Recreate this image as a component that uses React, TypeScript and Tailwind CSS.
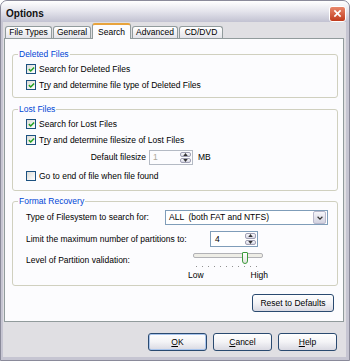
import React from "react"

// XP style "Options" dialog, Search tab

function Check({ checked }: { checked?: boolean }) {
  return (
    <span className="flex h-[10px] w-[10px] shrink-0 items-center justify-center border border-[#1c5180] bg-linear-to-br from-[#dcdcd7] to-white">
      {checked && (
        <svg viewBox="0 0 8 8" className="h-[7px] w-[7px]">
          <path d="M1 3.6 L3.1 5.7 L7 1.6" fill="none" stroke="#21a121" strokeWidth="1.7" />
        </svg>
      )}
    </span>
  )
}

function CheckRow({ checked, children }: { checked?: boolean; children: React.ReactNode }) {
  return (
    <div className="flex h-[12px] items-center pl-[13px]">
      <Check checked={checked} />
      <span className="ml-[3px] whitespace-nowrap">{children}</span>
    </div>
  )
}

function Spin() {
  return (
    <div className="flex h-full w-[12px] shrink-0 flex-col gap-px py-px pr-px">
      {[0, 1].map((i) => (
        <div
          key={i}
          className="flex flex-1 items-center justify-center rounded-[2px] border border-[#a0a0b4] bg-linear-to-b from-[#f8f8fc] to-[#d8d8e4]"
        >
          <svg viewBox="0 0 6 4" className="h-[3px] w-[5px]">
            <path d={i === 0 ? "M0 4 L3 0 L6 4 Z" : "M0 0 L3 4 L6 0 Z"} fill="#333" />
          </svg>
        </div>
      ))}
    </div>
  )
}

function Group({ label, className, children }: { label: string; className?: string; children: React.ReactNode }) {
  return (
    <fieldset className={`ml-[7px] mr-[5px] rounded-[3px] border border-[#d0d0bf] ${className ?? ""}`}>
      <legend className="ml-[5px] px-px leading-[10px] text-[#0046d5]">{label}</legend>
      {children}
    </fieldset>
  )
}

function Tab({ label, active, w }: { label: string; active?: boolean; w: string }) {
  if (active) {
    return (
      <div
        className={`relative z-10 -mb-px flex h-[16px] shrink-0 items-start justify-center rounded-t-[3px] border-x border-t-2 border-x-[#919b9c] border-t-[#e8a33c] bg-[#fcfcfe] pt-[2px] ${w}`}
      >
        {label}
      </div>
    )
  }
  return (
    <div
      className={`flex h-[12px] shrink-0 items-center justify-center rounded-t-[3px] border border-b-0 border-[#919b9c] bg-linear-to-b from-white to-[#e4e4ea] ${w}`}
    >
      {label}
    </div>
  )
}

function XpButton({ children, className, primary }: { children: React.ReactNode; className?: string; primary?: boolean }) {
  return (
    <div
      className={`flex h-[18px] items-center justify-center rounded-[3px] border border-[#2a4a70] bg-linear-to-b from-white via-[#f3f3f6] to-[#d9d9e2] ${
        primary ? "shadow-[inset_0_0_0_1px_#a8c4ec]" : ""
      } ${className ?? ""}`}
    >
      {children}
    </div>
  )
}

export default function App() {
  return (
    <div className="h-[361px] w-[350px] bg-white font-['Liberation_Sans',Arial,sans-serif] text-[8.5px] leading-[11px] text-black">
      <div className="flex h-full flex-col rounded-t-[7px] border border-[#8a8a9a] bg-[#c6c5d2]">
        {/* title bar */}
        <div className="flex h-[21px] shrink-0 items-center justify-between rounded-t-[6px] bg-linear-to-b from-white via-[#e4e4ec] to-[#c2c2d2] pl-[5px] pr-[3px] pt-[4px]">
          <span className="text-[10px] font-bold leading-[12px] text-[#111]">Options</span>
          <div className="flex h-[16px] w-[17px] items-center justify-center rounded-[3px] border border-white bg-linear-to-b from-[#e8866a] to-[#c0391a]">
            <svg viewBox="0 0 10 10" className="h-[9px] w-[9px]">
              <path d="M1.5 1.5 L8.5 8.5 M8.5 1.5 L1.5 8.5" stroke="white" strokeWidth="1.8" />
            </svg>
          </div>
        </div>

        {/* body */}
        <div className="mb-[3px] ml-[2px] mr-[3px] flex flex-1 flex-col bg-[#e0dfe3] pl-px">
          {/* tabs */}
          <div className="ml-px flex h-[16px] items-end gap-px">
            <Tab label="File Types" w="w-[47px]" />
            <Tab label="General" w="w-[38px]" />
            <Tab label="Search" w="w-[39px]" active />
            <Tab label="Advanced" w="w-[46px]" />
            <Tab label="CD/DVD" w="w-[44px]" />
          </div>

          {/* tab panel */}
          <div className="flex h-[284px] w-[340px] flex-col border border-[#919b9c] bg-[#fcfcfe]">
            <Group label="Deleted Files" className="mt-[10px] pb-[6px]">
              <div className="mt-[4px] flex flex-col gap-[4px]">
                <CheckRow checked>Search for Deleted Files</CheckRow>
                <CheckRow checked>
                  T<span className="underline">r</span>y and determine file type of Deleted Files
                </CheckRow>
              </div>
            </Group>

            <Group label="Lost Files" className="mt-[6px] pb-[8px]">
              <div className="mt-[4px] flex flex-col">
                <CheckRow checked>Search for Lost Files</CheckRow>
                <div className="mt-[4px]">
                  <CheckRow checked>
                    T<span className="underline">r</span>y and determine filesize of Lost Files
                  </CheckRow>
                </div>
                <div className="mt-[4px] flex h-[15px] items-center pl-[13px]">
                  <span className="w-[120px] text-right">Default filesize</span>
                  <div className="ml-[3px] flex h-[15px] w-[44px] items-center border border-[#b4bac4] bg-[#fcfcfe]">
                    <span className="flex-1 pl-[3px] text-[#aca899]">1</span>
                    <Spin />
                  </div>
                  <span className="ml-[5px]">MB</span>
                </div>
                <div className="mt-[5px]">
                  <CheckRow>Go to end of file when file found</CheckRow>
                </div>
              </div>
            </Group>

            <Group label="Format Recovery" className="mt-[5px] pb-[4px]">
              <div className="mt-[4px] flex flex-col pl-[13px]">
                <div className="flex h-[15px] items-center">
                  <span className="w-[139px]">Type of Filesystem to search for:</span>
                  <div className="flex h-[15px] w-[163px] items-center border border-[#7f9db9] bg-white">
                    <span className="flex-1 whitespace-pre pl-[3px]">ALL  (both FAT and NTFS)</span>
                    <div className="mr-px flex h-[13px] w-[13px] items-center justify-center rounded-[2px] border border-[#b8b8cc] bg-linear-to-b from-[#f6f6fa] to-[#d2d2e0]">
                      <svg viewBox="0 0 8 5" className="h-[4px] w-[6px]">
                        <path d="M0.8 0.8 L4 4 L7.2 0.8" fill="none" stroke="#333" strokeWidth="1.6" />
                      </svg>
                    </div>
                  </div>
                </div>

                <div className="mt-[6px] flex h-[16px] items-center">
                  <span className="w-[184px]">Limit the maximum number of partitions to:</span>
                  <div className="flex h-[16px] w-[48px] items-center border border-[#7f9db9] bg-white">
                    <span className="flex-1 pl-[4px]">4</span>
                    <Spin />
                  </div>
                </div>

                <div className="mt-[5px] flex">
                  <span className="mt-[3px] w-[162px]">Level of Partition validation:</span>
                  <div className="flex w-[80px] flex-col">
                    <div className="relative h-[13px]">
                      <div className="mx-[5px] mt-px h-[5px] rounded-[2px] border border-[#b2b2b6] bg-[#eeede6]" />
                      <div className="absolute left-[54px] top-0 h-[12px] w-[6px] rounded-b-[3px] rounded-t-[1px] border border-[#3c9a3c] bg-linear-to-b from-white to-[#e4e4e0]" />
                    </div>
                    <div className="mt-px flex justify-between pl-[8px] pr-[11px]">
                      {Array.from({ length: 11 }).map((_, i) => (
                        <span key={i} className="h-px w-px bg-[#909090]" />
                      ))}
                    </div>
                    <div className="mt-[3px] flex justify-between">
                      <span>Low</span>
                      <span>High</span>
                    </div>
                  </div>
                </div>
              </div>
            </Group>

            <div className="mr-[9px] mt-[8px] flex justify-end">
              <XpButton className="w-[82px]">Reset to Defaults</XpButton>
            </div>
          </div>

          {/* dialog buttons */}
          <div className="mt-[11px] flex justify-end gap-[6px] pr-[9px]">
            <XpButton className="w-[59px]" primary>
              <span className="underline">O</span>K
            </XpButton>
            <XpButton className="w-[59px]">
              <span className="underline">C</span>ancel
            </XpButton>
            <XpButton className="w-[59px]">
              <span className="underline">H</span>elp
            </XpButton>
          </div>
        </div>
      </div>
    </div>
  )
}
